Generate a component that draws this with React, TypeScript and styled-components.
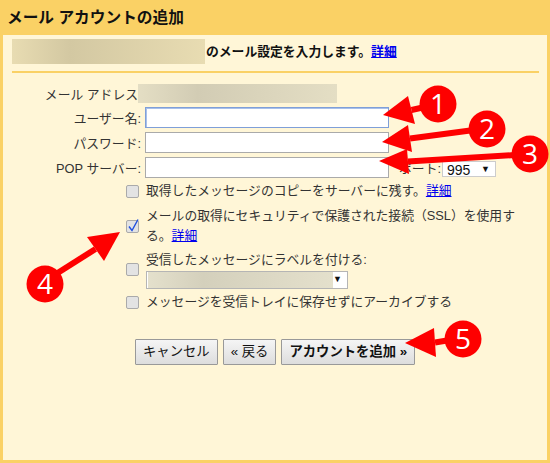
import styled, { createGlobalStyle } from "styled-components";

const GlobalStyle = createGlobalStyle`
  html, body {
    margin: 0;
    padding: 0;
    background: #fad165;
  }
  body {
    font-family: Arial, "Liberation Sans", "Noto Sans CJK JP", sans-serif;
    font-size: 12.8px;
    color: #222;
  }
`;

const callouts = [
  { n: 1, cx: 438, cy: 104, from: [425, 107], tip: [383, 115], a: [408, 96], b: [415, 124] },
  { n: 2, cx: 487, cy: 129, from: [474, 130], tip: [382, 142], a: [408, 125], b: [412, 152] },
  { n: 3, cx: 530, cy: 154, from: [515, 155], tip: [379, 161], a: [407, 149], b: [409, 174] },
  { n: 4, cx: 45, cy: 284, from: [56, 274], tip: [120, 232], a: [87, 237], b: [104, 261] },
  { n: 5, cx: 463, cy: 339, from: [450, 340], tip: [405, 343], a: [434, 328], b: [436, 357] },
];

const App = () => {
  return (
    <Frame>
      <GlobalStyle />
      <Title>メール アカウントの追加</Title>
      <Panel>
        <Intro>
          <Blur $width={193} $height={25} $tone="#d3c8a2" $edge="#e8dcb2" />
          <IntroText>
            のメール設定を入力します。<a href="#a">詳細</a>
          </IntroText>
        </Intro>
        <Form>
          <AddressRow>
            <Label>メール アドレス</Label>
            <Blur $width={199} $height={19} $tone="#d2ccb4" $edge="#e4dec4" />
          </AddressRow>
          <FieldRow>
            <Label>ユーザー名:</Label>
            <TextBox $focus />
          </FieldRow>
          <FieldRow>
            <Label>パスワード:</Label>
            <TextBox />
          </FieldRow>
          <FieldRow>
            <Label>POP サーバー:</Label>
            <TextBox />
            <PortLabel>ポート:</PortLabel>
            <PortSelect>
              995
              <Caret>▼</Caret>
            </PortSelect>
          </FieldRow>
          <CheckRow $top={1}>
            <CheckCol>
              <Check />
            </CheckCol>
            <CheckText>
              取得したメッセージのコピーをサーバーに残す。<a href="#a">詳細</a>
            </CheckText>
          </CheckRow>
          <CheckRow $top={5}>
            <CheckCol>
              <Check $checked>
                <svg width="13" height="14" viewBox="0 0 13 14">
                  <path d="M2 7.5 L5 11.5 L11 0.5" fill="none" stroke="#1f4fe0" strokeWidth="1.4" />
                </svg>
              </Check>
            </CheckCol>
            <CheckText>
              メールの取得にセキュリティで保護された接続（SSL）を使用する。<a href="#a">詳細</a>
            </CheckText>
          </CheckRow>
          <CheckRow $top={4}>
            <CheckCol>
              <Check />
            </CheckCol>
            <CheckText>
              受信したメッセージにラベルを付ける:
              <LabelSelect>
                <Blur $width={185} $height={16} $tone="#d4d0bc" $edge="#e4e0cc" />
                <Caret>▼</Caret>
              </LabelSelect>
            </CheckText>
          </CheckRow>
          <CheckRow $top={3}>
            <CheckCol>
              <Check />
            </CheckCol>
            <CheckText>メッセージを受信トレイに保存せずにアーカイブする</CheckText>
          </CheckRow>
          <Buttons>
            <Button>キャンセル</Button>
            <Button>« 戻る</Button>
            <Button $primary>アカウントを追加 »</Button>
          </Buttons>
        </Form>
      </Panel>
      <Overlay width="550" height="463" viewBox="0 0 550 463">
        {callouts.map((c) => (
          <g key={c.n}>
            <line x1={c.from[0]} y1={c.from[1]} x2={(c.a[0] + c.b[0]) / 2} y2={(c.a[1] + c.b[1]) / 2} stroke="#fe0000" strokeWidth="6" />
            <polygon points={`${c.tip} ${c.a} ${c.b}`} fill="#fe0000" />
            <circle cx={c.cx} cy={c.cy} r="18.5" fill="#fe0000" />
            <text x={c.cx} y={c.cy + 10} textAnchor="middle" fontSize="28" fill="#fff" fontFamily="'Open Sans', sans-serif">
              {c.n}
            </text>
          </g>
        ))}
      </Overlay>
    </Frame>
  );
};

const Frame = styled.div`
  position: relative;
  width: 550px;
  height: 463px;
  box-sizing: border-box;
  padding: 0 3px 3px;
  background: #fad165;
  overflow: hidden;
  display: flex;
  flex-direction: column;
`;

const Title = styled.div`
  height: 35px;
  line-height: 36px;
  padding-left: 4px;
  font-size: 15.7px;
  font-weight: 700;
  color: #111;
  flex-shrink: 0;
`;

const Panel = styled.div`
  flex: 1;
  background: #fff6d7;
  padding: 4px 8px 0 9px;
  a {
    color: #0000ee;
  }
`;

const Intro = styled.div`
  display: flex;
  align-items: flex-start;
  height: 32px;
  border-bottom: 2px solid #fad165;
`;

const IntroText = styled.div`
  font-weight: 700;
  line-height: 25px;
  margin-left: 1px;
  color: #111;
`;

const Blur = styled.div<{ $width: number; $height: number; $tone: string; $edge: string }>`
  width: ${({ $width }) => $width}px;
  height: ${({ $height }) => $height}px;
  flex-shrink: 0;
  background: linear-gradient(90deg, ${({ $edge }) => $edge} 0%, ${({ $tone }) => $tone} 30%, ${({ $edge }) => $edge} 100%);
`;

const Form = styled.div`
  padding-top: 11px;
`;

const Label = styled.div`
  width: 129px;
  text-align: right;
  flex-shrink: 0;
  color: #333;
  white-space: nowrap;
`;

const AddressRow = styled.div`
  display: flex;
  align-items: center;
  height: 19px;
  margin-bottom: 2px;
  ${Label} {
    width: 126px;
  }
`;

const FieldRow = styled.div`
  display: flex;
  align-items: center;
  height: 25px;
`;

const TextBox = styled.div<{ $focus?: boolean }>`
  width: 244px;
  height: 21px;
  box-sizing: border-box;
  margin-left: 4px;
  background: #fff;
  border: 1px solid ${({ $focus }) => ($focus ? "#7f9fd8" : "#aaa")};
  box-shadow: ${({ $focus }) => ($focus ? "inset 1px 1px 0 #a8c0ea" : "none")};
`;

const PortLabel = styled.div`
  margin-left: 6px;
  width: 46px;
  text-align: right;
  color: #333;
  white-space: nowrap;
`;

const PortSelect = styled.div`
  position: relative;
  width: 54px;
  height: 16px;
  box-sizing: border-box;
  margin: 3px 0 0 1px;
  padding-left: 4px;
  line-height: 17px;
  font-size: 14px;
  background: #fff;
  border: 1px solid #ccc;
  color: #111;
`;

const Caret = styled.span`
  position: absolute;
  right: 5px;
  top: 0;
  font-size: 9px;
  line-height: 14px;
  color: #111;
`;

const CheckRow = styled.div<{ $top: number }>`
  display: flex;
  margin-top: ${({ $top }) => $top}px;
  align-items: center;
`;

const CheckCol = styled.div`
  width: 127px;
  display: flex;
  justify-content: flex-end;
  flex-shrink: 0;
`;

const Check = styled.div<{ $checked?: boolean }>`
  width: 13px;
  height: 13px;
  box-sizing: border-box;
  border: 1px solid #aaa;
  border-radius: 2px;
  background: #e3e3e3;
  position: relative;
  svg {
    position: absolute;
    left: 0;
    top: -2px;
  }
`;

const CheckText = styled.div`
  width: 376px;
  margin-left: 7px;
  line-height: 20px;
  color: #333;
`;

const LabelSelect = styled.div`
  position: relative;
  display: flex;
  width: 202px;
  height: 18px;
  box-sizing: border-box;
  padding: 0 0 0 1px;
  background: #fff;
  border: 1px solid #b5b5b5;
  margin-top: 1px;
`;

const Buttons = styled.div`
  display: flex;
  gap: 5px;
  margin-top: 27px;
  padding-left: 123px;
`;

const Button = styled.div<{ $primary?: boolean }>`
  height: 26px;
  box-sizing: border-box;
  padding: 0 7px;
  line-height: 24px;
  font-size: 13.33px;
  border: 1px solid #999;
  border-radius: 1px;
  background: linear-gradient(#f5f5f5, #dddddd);
  color: #111;
  font-weight: ${({ $primary }) => ($primary ? 700 : 400)};
  white-space: nowrap;
`;

const Overlay = styled.svg`
  position: absolute;
  left: 0;
  top: 0;
  pointer-events: none;
`;

export default App;
